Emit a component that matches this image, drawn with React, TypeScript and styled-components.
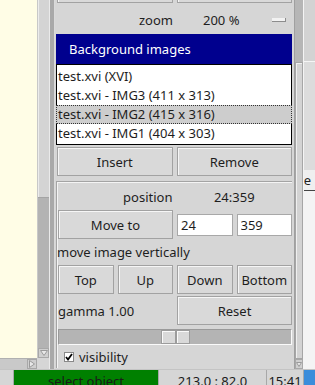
import React from "react";
import styled, { createGlobalStyle } from "styled-components";

const GlobalStyle = createGlobalStyle`
  html, body {
    margin: 0;
    padding: 0;
  }
  body {
    font-family: "Noto Sans", "Open Sans", sans-serif;
    font-size: 13px;
    color: #1e1e1e;
    background: #d6d6d6;
  }
`;

const Screen = styled.div`
  width: 315px;
  height: 385px;
  overflow: hidden;
  display: flex;
  flex-direction: column;
  background: #d6d6d6;
`;

const Main = styled.div`
  display: flex;
  height: 369px;
`;

const CanvasArea = styled.div`
  width: 49px;
  display: grid;
  grid-template-columns: 37px 12px;
  grid-template-rows: 358px 11px;
`;

const Canvas = styled.div`
  background: #fffde6;
`;

const VScroll = styled.div<{ $thumb: number }>`
  display: flex;
  flex-direction: column;
  background: #b3b3b3;
  border-left: 1px solid #c8c8c8;

  .thumb {
    height: ${(p) => p.$thumb}px;
    background: #d4d4d4;
    border-bottom: 1px solid #a4a4a4;
    box-shadow: inset 1px 0 0 #ececec;
  }
  .trough {
    flex: 1;
  }
`;

const ArrowBox = styled.div<{ $dir: "down" | "right" }>`
  width: ${(p) => (p.$dir === "down" ? "100%" : "10px")};
  height: ${(p) => (p.$dir === "down" ? "10px" : "100%")};
  background: #cfcfcf;
  border: 1px solid #a8a8a8;
  box-sizing: border-box;
  display: flex;
  align-items: center;
  justify-content: center;

  svg {
    display: block;
  }
`;

const HScroll = styled.div`
  display: flex;
  justify-content: flex-end;
  background: #c9c9c9;
  border-top: 1px solid #b0b0b0;
`;

const Corner = styled.div`
  background: #d6d6d6;
`;

const Splitter = styled.div`
  width: 4px;
  background: #a9a9a9;
  border-left: 1px solid #eaeaea;
  border-right: 1px solid #dadada;
`;

const Panel = styled.div`
  width: 240px;
  overflow: hidden;
  border-right: 1px solid #a0a0a0;
  box-sizing: border-box;
`;

// panel content is scrolled down a little: only the bottom of the first buttons shows
const Scrolled = styled.div`
  margin-top: -26px;
  padding: 0 2px 0 1px;
`;

const ButtonGrid = styled.div<{ $top?: number }>`
  display: grid;
  grid-template-columns: repeat(4, 1fr);
  gap: 4px;
  padding-left: 1px;
  margin-top: ${(p) => p.$top ?? 0}px;
`;

const Button = styled.button<{ $span?: number }>`
  grid-column: span ${(p) => p.$span ?? 1};
  height: 29px;
  margin: 0;
  padding: 0;
  font: inherit;
  color: #1e1e1e;
  background: #d9d9d9;
  border: 1px solid #a2a2a2;
  box-shadow: inset 1px 1px 0 #f6f6f6;
  text-align: center;
`;

const ZoomRow = styled.div`
  display: flex;
  align-items: center;
  height: 31px;
  padding: 2px 0 0 1px;
  box-sizing: border-box;

  .label {
    width: 116px;
    text-align: right;
  }
  .value {
    margin-left: 30px;
  }
`;

const MinusButton = styled.div`
  margin-left: auto;
  margin-right: 6px;
  width: 13px;
  height: 3px;
  background: #f2f2f2;
  border-right: 1px solid #8c8c8c;
  border-bottom: 1px solid #8c8c8c;
`;

const Header = styled.div`
  height: 30px;
  display: flex;
  align-items: center;
  padding-left: 13px;
  background: #00008e;
  color: #fff;
`;

const List = styled.div`
  border: 1px solid #000;
  background: #fff;
  padding: 2px 0 1px;
`;

const ListItem = styled.div<{ $selected?: boolean }>`
  height: 19px;
  line-height: 17px;
  padding-left: 1px;
  box-sizing: border-box;
  white-space: nowrap;
  background: ${(p) => (p.$selected ? "#cdcdcd" : "transparent")};
  border: 1px dotted ${(p) => (p.$selected ? "#333" : "transparent")};
  margin: 0 -1px;
`;

const Group = styled.div`
  margin-top: 5px;
  border-top: 1px solid #a4a4a4;
  border-left: 1px solid #a4a4a4;
  box-shadow: inset 1px 1px 0 #f4f4f4;
  padding-top: 1px;
`;

const InfoRow = styled.div`
  display: grid;
  grid-template-columns: repeat(4, 1fr);
  gap: 4px;
  height: 27px;
  align-items: center;

  .right {
    grid-column: span 2;
    text-align: right;
  }
  .center {
    grid-column: span 2;
    text-align: center;
  }
`;

const Cell = styled.div<{ $span?: number }>`
  grid-column: span ${(p) => p.$span ?? 1};
  display: flex;
  align-items: center;
  white-space: nowrap;
`;

const Field = styled.input`
  width: 100%;
  height: 22px;
  box-sizing: border-box;
  margin: 0;
  padding: 0 3px;
  font: inherit;
  color: #1e1e1e;
  background: #fff;
  border: 1px solid #a8a8a8;
  outline: none;
`;

const Label = styled.div`
  height: 26px;
  line-height: 26px;
`;

const Slider = styled.div`
  position: relative;
  margin: 4px 0 0 1px;
  height: 16px;
  box-sizing: border-box;
  background: #b4b4b4;
  border: 1px solid;
  border-color: #9a9a9a #fafafa #fafafa #9a9a9a;
`;

const Thumb = styled.div`
  position: absolute;
  top: 0;
  bottom: 0;
  width: 29px;
  display: flex;

  span {
    flex: 1;
    background: #d9d9d9;
    border: 1px solid #9c9c9c;
    box-shadow: inset 1px 1px 0 #fafafa;
  }
`;

const CheckRow = styled.label`
  display: flex;
  align-items: center;
  gap: 5px;
  height: 23px;
  padding-left: 7px;
`;

const CheckBox = styled.span`
  width: 10px;
  height: 10px;
  background: #fff;
  border: 1px solid #888;
  box-sizing: border-box;
  display: flex;
  align-items: center;
  justify-content: center;
`;

const PanelScroll = styled.div`
  width: 8px;
  display: flex;
  flex-direction: column;
  background: #b6b6b6;

  .trough {
    height: 62px;
  }
  .thumb {
    flex: 1;
    background: #d3d3d3;
    border: 1px solid #a6a6a6;
    box-shadow: inset 1px 1px 0 #efefef;
  }
`;

const RightStrip = styled.div`
  flex: 1;
  display: flex;
  flex-direction: column;
  overflow: hidden;
  border-left: 1px solid #f4f4f4;

  .top {
    height: 61px;
    background: #d3d3d3;
    border-bottom: 1px solid #f6f6f6;
  }
  .mid {
    height: 108px;
    background: #dcdcdc;
  }
  .tab {
    height: 20px;
    line-height: 20px;
    background: #efefef;
    border-bottom: 1px solid #444;
    white-space: nowrap;
    text-indent: -5px;
  }
  .rest {
    flex: 1;
    background: #f4f4f4;
  }
`;

const StatusBar = styled.div`
  display: flex;
  height: 16px;
  border-top: 1px solid #c4c4c4;
  box-sizing: border-box;
  overflow: hidden;
  line-height: 18px;
`;

const StatusCell = styled.div<{ $w: number; $bg?: string }>`
  width: ${(p) => p.$w}px;
  flex: none;
  padding-top: 2px;
  text-align: center;
  white-space: nowrap;
  background: ${(p) => p.$bg ?? "#d6d6d6"};
  border-left: 1px solid #a8a8a8;
  box-sizing: border-box;
  color: #1a1a1a;
`;

const images = [
  "test.xvi (XVI)",
  "test.xvi - IMG3 (411 x 313)",
  "test.xvi - IMG2 (415 x 316)",
  "test.xvi - IMG1 (404 x 303)",
];

function App() {
  const [selected, setSelected] = React.useState(2);
  const [visible, setVisible] = React.useState(true);
  const gamma = 1.0;
  const thumbLeft = Math.round(102 * gamma);

  return (
    <Screen>
      <GlobalStyle />
      <Main>
        <CanvasArea>
          <Canvas />
          <VScroll $thumb={197}>
            <div className="thumb" />
            <div className="trough" />
            <ArrowBox $dir="down">
              <svg width="8" height="6" viewBox="0 0 8 6">
                <path d="M0.5 0.5 L7.5 0.5 L4 5.5 Z" fill="#e8e8e8" stroke="#9a9a9a" />
              </svg>
            </ArrowBox>
          </VScroll>
          <HScroll>
            <ArrowBox $dir="right">
              <svg width="6" height="8" viewBox="0 0 6 8">
                <path d="M0.5 0.5 L5.5 4 L0.5 7.5 Z" fill="#e8e8e8" stroke="#9a9a9a" />
              </svg>
            </ArrowBox>
          </HScroll>
          <Corner />
        </CanvasArea>
        <Splitter />
        <Panel>
          <Scrolled>
            <ButtonGrid>
              <Button $span={2} />
              <Button $span={2} />
            </ButtonGrid>
            <ZoomRow>
              <span className="label">zoom</span>
              <span className="value">200 %</span>
              <MinusButton />
            </ZoomRow>
            <Header>Background images</Header>
            <List>
              {images.map((name, i) => (
                <ListItem key={name} $selected={i === selected} onClick={() => setSelected(i)}>
                  {name}
                </ListItem>
              ))}
            </List>
            <ButtonGrid $top={2}>
              <Button $span={2}>Insert</Button>
              <Button $span={2}>Remove</Button>
            </ButtonGrid>
            <Group>
              <InfoRow>
                <span className="right">position</span>
                <span className="center">24:359</span>
              </InfoRow>
              <ButtonGrid>
                <Button $span={2}>Move to</Button>
                <Cell>
                  <Field defaultValue="24" />
                </Cell>
                <Cell>
                  <Field defaultValue="359" />
                </Cell>
              </ButtonGrid>
              <Label>move image vertically</Label>
              <ButtonGrid>
                <Button>Top</Button>
                <Button>Up</Button>
                <Button>Down</Button>
                <Button>Bottom</Button>
              </ButtonGrid>
              <ButtonGrid $top={2}>
                <Cell $span={2}>gamma {gamma.toFixed(2)}</Cell>
                <Button $span={2}>Reset</Button>
              </ButtonGrid>
              <Slider>
                <Thumb style={{ left: thumbLeft }}>
                  <span />
                  <span />
                </Thumb>
              </Slider>
              <CheckRow onClick={() => setVisible(!visible)}>
                <CheckBox>
                  {visible && (
                    <svg width="8" height="8" viewBox="0 0 8 8">
                      <path d="M1 4 L3 6.5 L7 1" fill="none" stroke="#000" strokeWidth="1.8" />
                    </svg>
                  )}
                </CheckBox>
                visibility
              </CheckRow>
            </Group>
          </Scrolled>
        </Panel>
        <PanelScroll>
          <div className="trough" />
          <div className="thumb" />
          <ArrowBox $dir="down">
            <svg width="6" height="5" viewBox="0 0 6 5">
              <path d="M0.5 0.5 L5.5 0.5 L3 4.5 Z" fill="#e8e8e8" stroke="#9a9a9a" />
            </svg>
          </ArrowBox>
        </PanelScroll>
        <RightStrip>
          <div className="top" />
          <div className="mid" />
          <div className="tab">te</div>
          <div className="rest" />
        </RightStrip>
      </Main>
      <StatusBar>
        <StatusCell $w={13} style={{ borderLeft: "none" }} />
        <StatusCell $w={145} $bg="#008000">select object</StatusCell>
        <StatusCell $w={108}>213.0 : 82.0</StatusCell>
        <StatusCell $w={37}>15:41</StatusCell>
        <StatusCell $w={12} $bg="#3b8ddb" />
      </StatusBar>
    </Screen>
  );
}

export default App;
